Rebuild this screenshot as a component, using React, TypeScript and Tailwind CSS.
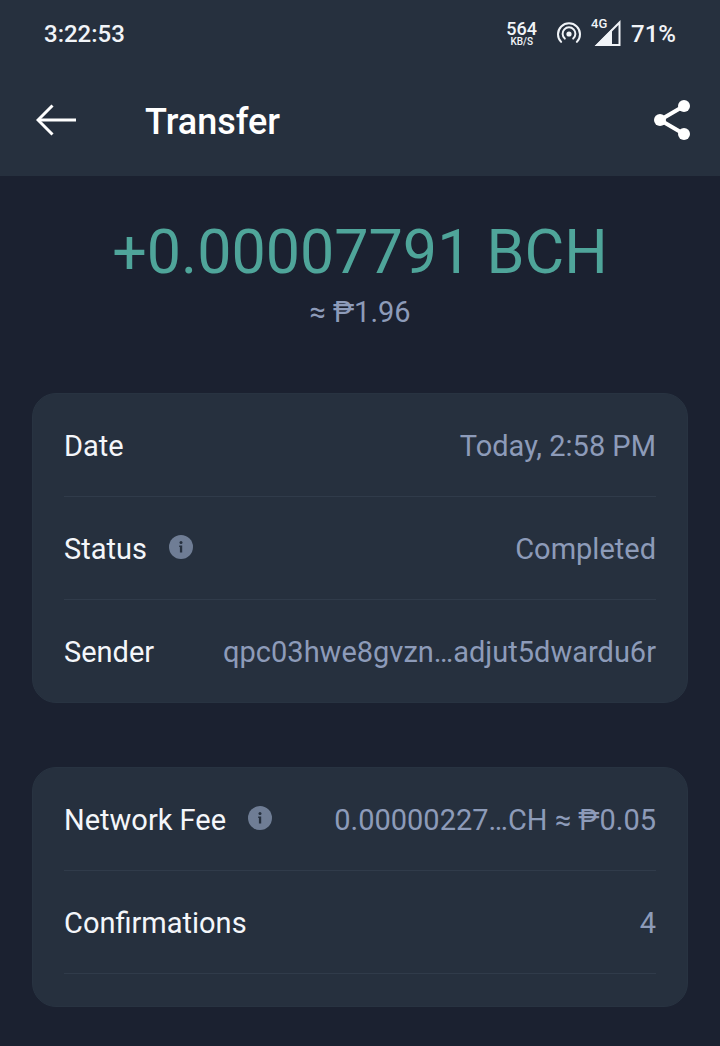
import type { ReactNode } from 'react';

type Detail = {
  label: string;
  value: string;
  info?: boolean;
};

const transferDetails: Detail[] = [
  { label: 'Date', value: 'Today, 2:58 PM' },
  { label: 'Status', value: 'Completed', info: true },
  { label: 'Sender', value: 'qpc03hwe8gvzn…adjut5dwardu6r' },
];

const networkDetails: Detail[] = [
  { label: 'Network Fee', value: '0.00000227…CH ≈ ₱0.05', info: true },
  { label: 'Confirmations', value: '4' },
];

function StatusBar() {
  return (
    <div className="flex h-16 items-center justify-between pt-1 pr-11 pl-11 font-medium text-[#f1f4f8]">
      <span className="text-2xl">3:22:53</span>
      <div className="flex items-center">
        <div className="mr-5 flex flex-col items-center">
          <span className="text-lg leading-4">564</span>
          <span className="text-[10px] leading-[10px]">KB/S</span>
        </div>

        {/* Hotspot */}
        <svg className="mr-2.5 h-6 w-6" viewBox="0 0 24 24" fill="none" stroke="currentColor" strokeWidth="2" strokeLinecap="round">
          <circle cx="12" cy="12" r="2.6" fill="currentColor" stroke="none" />
          <path d="M4.1 19.9A11 11 0 1 1 19.9 19.9" />
          <path d="M7.8 16.6A6.4 6.4 0 1 1 16.2 16.6" />
        </svg>

        {/* Signal */}
        <div className="relative mr-2 h-7 w-8">
          <svg className="h-7 w-8" viewBox="0 0 32 28">
            <path d="M28.5 2.5V25H6Z" fill="none" stroke="currentColor" strokeWidth="2" />
            <path d="M4 26L21 9V26Z" fill="currentColor" />
          </svg>
          <span className="absolute -top-1 left-0 bg-[#26303e] text-[13px] leading-4">4G</span>
        </div>

        <span className="text-2xl">71%</span>
      </div>
    </div>
  );
}

function Header() {
  return (
    <div className="flex h-28 items-center pr-7 pl-9 text-white">
      <button type="button" aria-label="Back" className="mr-[69px]">
        <svg className="h-8 w-10" viewBox="0 0 40 32" fill="none" stroke="currentColor" strokeWidth="3">
          <path d="M16.5 1.5L2 16L16.5 30.5" />
          <path d="M2 16H40" />
        </svg>
      </button>
      <h1 className="pt-1 text-4xl font-medium">Transfer</h1>
      <button type="button" aria-label="Share" className="ml-auto">
        <svg className="h-10 w-10" viewBox="0 0 40 40" fill="currentColor">
          <path d="M32 6L8 20L32 34" fill="none" stroke="currentColor" strokeWidth="4" />
          <circle cx="32" cy="6" r="6" />
          <circle cx="8" cy="20" r="6" />
          <circle cx="32" cy="34" r="6" />
        </svg>
      </button>
    </div>
  );
}

function InfoButton({ label }: { label: string }) {
  return (
    <button type="button" aria-label={`About ${label}`} className="mb-1 ml-[22px]">
      <svg className="h-6 w-6" viewBox="0 0 24 24">
        <circle cx="12" cy="12" r="12" fill="#6f7d95" />
        <circle cx="12" cy="7.4" r="1.5" fill="#26303e" />
        <path d="M10.2 10.6H13.2V17.6H10.9V12.1H10.2Z" fill="#26303e" />
      </svg>
    </button>
  );
}

function DetailRow({ label, value, info }: Detail) {
  return (
    <div className="flex items-center justify-between pt-8 pb-[30px] text-[29px] leading-10">
      <dt className="flex items-center text-[#f4f6fa]">
        {label}
        {info && <InfoButton label={label} />}
      </dt>
      <dd className="text-[#8d9bb9]">{value}</dd>
    </div>
  );
}

function Card({ children }: { children: ReactNode }) {
  return (
    <section className="rounded-3xl border border-[#283341] bg-[#26303e] px-[31px]">
      {children}
    </section>
  );
}

export default function App() {
  return (
    <div className="min-h-screen bg-[#1b2130] font-['Roboto',sans-serif]">
      <header className="bg-[#26303e]">
        <StatusBar />
        <Header />
      </header>

      <main className="px-8 pb-9">
        {/* Amount */}
        <div className="pt-10 text-center">
          <p className="text-[61px] leading-[72px] text-[#4fa59a]">+0.00007791 BCH</p>
          <p className="mt-1 text-[29px] leading-10 text-[#8d9bb9]">≈ ₱1.96</p>
        </div>

        <div className="mt-[61px] space-y-16">
          <Card>
            <dl className="divide-y divide-[#303b4a]">
              {transferDetails.map((detail) => (
                <DetailRow key={detail.label} {...detail} />
              ))}
            </dl>
          </Card>

          <Card>
            <dl className="divide-y divide-[#303b4a] border-b border-[#303b4a]">
              {networkDetails.map((detail) => (
                <DetailRow key={detail.label} {...detail} />
              ))}
            </dl>
            <div className="h-8" />
          </Card>
        </div>
      </main>
    </div>
  );
}
